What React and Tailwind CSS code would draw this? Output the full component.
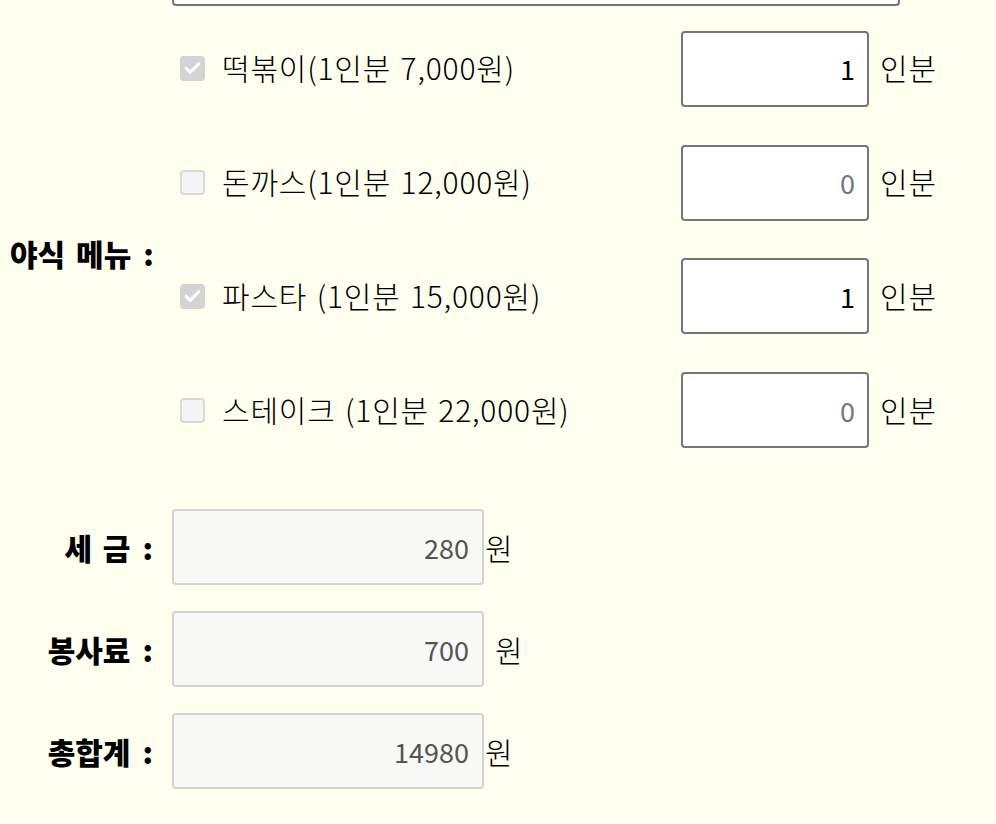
import { Check } from "lucide-react";

const menus = [
  { name: "떡볶이(1인분 7,000원)", checked: true, qty: "1" },
  { name: "돈까스(1인분 12,000원)", checked: false, qty: "" },
  { name: "파스타 (1인분 15,000원)", checked: true, qty: "1" },
  { name: "스테이크 (1인분 22,000원)", checked: false, qty: "" },
];

const totals = [
  { label: "세 금", value: "280", unit: "원", gap: "ml-[1px]" },
  { label: "봉사료", value: "700", unit: "원", gap: "ml-[11px]" },
  { label: "총합계", value: "14980", unit: "원", gap: "ml-[1px]" },
];

function Box({ checked }) {
  if (checked) {
    return (
      <span className="w-[25px] h-[25px] rounded-[4px] bg-[#d4d4d4] flex items-center justify-center">
        <Check className="w-[19px] h-[19px] text-white" strokeWidth={4} />
      </span>
    );
  }
  return <span className="w-[25px] h-[25px] rounded-[4px] bg-[#f5f5f5] border-2 border-[#d9d9d9]" />;
}

export default function App() {
  return (
    <div className="min-h-screen bg-[#fffff0] text-black text-[30px] font-light font-['Noto_Sans_CJK_KR','Noto_Sans',sans-serif] overflow-hidden">
      {/* bottom edge of the field above */}
      <div className="ml-[172px] w-[728px] h-[6px] border-x-2 border-b-2 border-[#767676] rounded-b-[4px] bg-white" />

      <div className="flex items-center h-[503px]">
        <div className="w-[172px] pl-[10px] pb-[8px] font-black whitespace-nowrap [word-spacing:4px]">
          야식 메뉴<span className="ml-[12px]">:</span>
        </div>
        <div className="flex flex-col gap-[37.7px] pb-[36px]">
          {menus.map((m) => (
            <div key={m.name} className="flex items-center">
              <div className="w-[509px] flex items-center pl-[8px] gap-[17px]">
                <Box checked={m.checked} />
                <span className="leading-none pb-[3px] tracking-[0.8px] [word-spacing:2px]">{m.name}</span>
              </div>
              <input
                readOnly
                value={m.qty}
                placeholder="0"
                className="w-[188px] h-[76px] bg-white border-2 border-[#767676] rounded-[4px] text-right pr-[12px] text-[27px] font-normal text-black placeholder:text-[#757575] outline-none"
              />
              <span className="ml-[11px] leading-none pb-[3px] tracking-[1px]">인분</span>
            </div>
          ))}
        </div>
      </div>

      <div className="flex flex-col gap-[26px]">
        {totals.map((t) => (
          <div key={t.label} className="flex items-center">
            <div className="w-[172px] pr-[19px] text-right font-black whitespace-nowrap [word-spacing:4px]">
              {t.label}<span className="ml-[12px]">:</span>
            </div>
            <input
              readOnly
              disabled
              value={t.value}
              className="w-[312px] h-[76px] bg-[#f8f8f5] border-2 border-[#d3d3cf] rounded-[4px] text-right pr-[13px] text-[27px] font-normal text-[#545454]"
            />
            <span className={`${t.gap} leading-none`}>{t.unit}</span>
          </div>
        ))}
      </div>
    </div>
  );
}
